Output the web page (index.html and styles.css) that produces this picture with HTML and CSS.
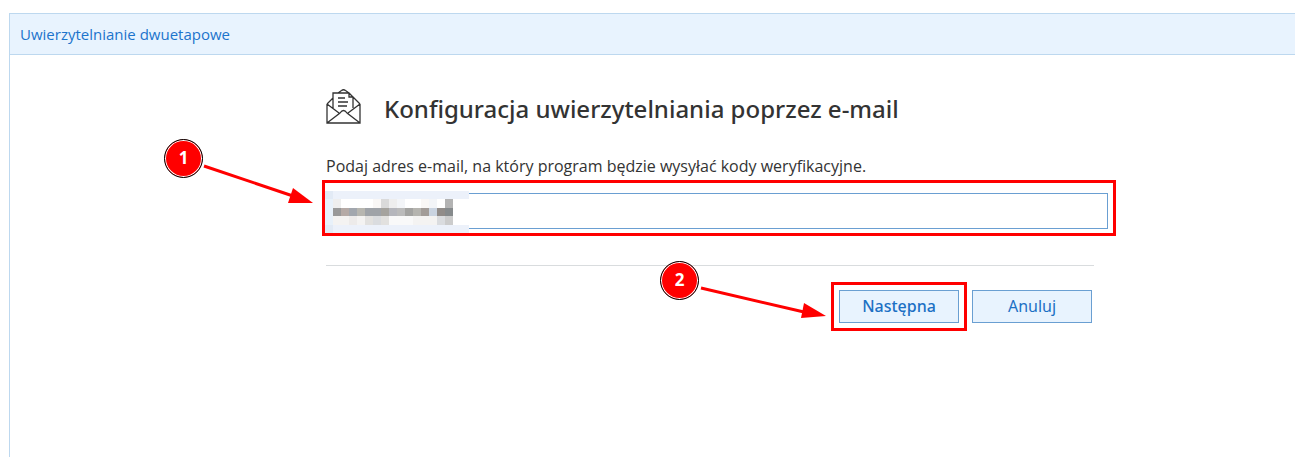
FILE: index.html
```html
<!DOCTYPE html>
<html lang="pl">
<head>
<meta charset="utf-8">
<meta name="viewport" content="width=device-width, initial-scale=1">
<title>Uwierzytelnianie dwuetapowe</title>
<link rel="stylesheet" href="styles.css">
</head>
<body>
<main class="panel">
  <header class="panel-header"><h1 class="panel-title">Uwierzytelnianie dwuetapowe</h1></header>
  <form class="setup">
    <div class="setup-heading">
      <svg class="mail-icon" viewBox="0 0 35 36" aria-hidden="true">
        <path d="M1 15V34H34V15M1 34L14 24Q17.500 19 21 24L34 34M1 15L13 24M34 15L22 24M1 15L7 9M34 15L27 8M7 19V4H23L27 8V19M12 4L15.500 1.500Q17.500 0 19.500 1.500L23 4M23 4V8H27"/>
        <path d="M12 9H19M12 13H22M12 17H21"/>
      </svg>
      <h2 class="setup-title">Konfiguracja uwierzytelniania poprzez e-mail</h2>
    </div>
    <label class="email-label" for="email">Podaj adres e-mail, na który program będzie wysyłać kody weryfikacyjne.</label>
    <div class="field">
      <input class="email-input" id="email" type="email">
      <svg class="mosaic" viewBox="0 0 144 42" shape-rendering="crispEdges" aria-hidden="true">
        <path fill="#fff" d="M0 0H144V42H0z"/>
        <path fill="#ecf1fa" d="M8 0H144V8H8zM8 34H144V42H8z"/>
        <path fill="#e8f1fa" d="M0 8H8V34H0z"/><path fill="#e2eaf5" d="M0 0H8V8H0zM0 34H8V42H0z"/>
        <path fill="#eeeeee" d="M8 8h8v9h-8zM64 8h8v9h-8z"/><path fill="#f9f7f6" d="M48 8h8v9h-8zM96 8h8v9h-8z"/>
        <path fill="#dadada" d="M56 8h8v9h-8z"/><path fill="#f3f5f8" d="M72 8h8v9h-8zM104 8h8v9h-8z"/><path fill="#b3b3b3" d="M120 8h8v9h-8z"/>
        <path fill="#999999" d="M8 17h8v8h-8z"/><path fill="#b5aaa6" d="M16 17h8v8h-8z"/><path fill="#a2a7ae" d="M24 17h8v8h-8z"/>
        <path fill="#b7b6b0" d="M32 17h8v8h-8z"/><path fill="#9fa3a8" d="M40 17h16v8h-16z"/><path fill="#a5a39e" d="M56 17h8v8h-8z"/>
        <path fill="#b5b6bc" d="M64 17h8v8h-8z"/><path fill="#bbbbbb" d="M72 17h8v8h-8z"/><path fill="#a3a3a1" d="M80 17h8v8h-8z"/>
        <path fill="#b5b4af" d="M88 17h8v8h-8z"/><path fill="#a29c98" d="M96 17h8v8h-8z"/><path fill="#cad4e1" d="M104 17h8v8h-8z"/>
        <path fill="#918c89" d="M112 17h8v8h-8z"/><path fill="#868a8c" d="M120 17h8v8h-8z"/>
        <path fill="#f4f3f2" d="M8 25h16v9h-16zM32 25h8v9h-8zM88 25h24v9h-24z"/><path fill="#edebea" d="M24 25h8v9h-8z"/>
        <path fill="#e2e1df" d="M40 25h8v9h-8zM56 25h8v9h-8z"/><path fill="#dadcdf" d="M48 25h8v9h-8zM112 25h8v9h-8z"/>
        <path fill="#f9f9f9" d="M64 25h24v9h-24z"/><path fill="#cccccc" d="M120 25h8v9h-8z"/>
      </svg>
      <span class="highlight highlight-field"></span>
      <span class="badge badge-one">1</span>
      <svg class="arrow arrow-one" viewBox="0 0 110 48" aria-hidden="true"><path class="shaft" d="M1 6L90 36"/><path class="head" d="M90 28L110 43L85 43z"/></svg>
    </div>
    <div class="actions">
      <div class="next">
        <button class="button button-primary" type="submit">Następna</button>
        <span class="highlight highlight-next"></span>
        <span class="badge badge-two">2</span>
        <svg class="arrow arrow-two" viewBox="0 0 126 36" aria-hidden="true"><path class="shaft" d="M1 4L104 28"/><path class="head" d="M104 19L126 32L101 34z"/></svg>
      </div>
      <button class="button" type="button">Anuluj</button>
    </div>
  </form>
</main>
</body>
</html>
```
FILE: styles.css
```css
* { box-sizing: border-box; }
body {
  margin: 0;
  background: #fff;
  color: #333;
  font-family: "Noto Sans", sans-serif;
  font-size: 16px;
}
.panel {
  min-height: calc(100vh - 13px);
  margin: 13px 0 0 9px;
  border-top: 1px solid #bdd8ef;
  border-left: 1px solid #bdd8ef;
}
.panel-header {
  padding: 10px;
  border-bottom: 1px solid #bdd8ef;
  background: #e8f3fe;
}
.panel-title {
  margin: 0;
  color: #1c74cc;
  font-family: "Open Sans", sans-serif;
  font-size: 15px;
  font-weight: 500;
  line-height: 20px;
}
.setup {
  max-width: 1084px;
  padding: 34px 0 0 316px;
}
.setup-heading {
  display: flex;
  align-items: flex-start;
  gap: 23px;
  height: 40px;
}
.mail-icon {
  width: 35px;
  height: 36px;
  fill: none;
  stroke: #333;
  stroke-width: 1.3;
}
.setup-title {
  margin: 0;
  font-size: 24px;
  font-weight: 500;
  line-height: 40px;
}
.email-label {
  display: block;
  margin-top: 25px;
  font-family: "Open Sans", sans-serif;
  line-height: 24px;
}
.field {
  position: relative;
  margin: 15px -14px 0 0;
}
.email-input {
  display: block;
  width: 100%;
  height: 36px;
  padding: 0 8px;
  border: 1px solid #6a9fd2;
  border-radius: 0;
  background: #fff;
  font: inherit;
}
.mosaic {
  position: absolute;
  top: -2px;
  left: -1px;
  width: 144px;
  height: 42px;
}
.highlight {
  position: absolute;
  border: 3px solid #f00;
  pointer-events: none;
}
.highlight-field { inset: -13px -8px -7px -4px; }
.highlight-next { inset: -8px; }
.badge {
  position: absolute;
  width: 39px;
  height: 39px;
  border: 1px solid #000;
  border-radius: 50%;
  background: #f00;
  box-shadow: inset 0 0 0 1px #fff;
  color: #fff;
  font-size: 17px;
  font-weight: 700;
  line-height: 36px;
  text-align: center;
}
.badge-one { top: -54px; left: -162px; }
.badge-two { top: -29px; left: -179px; }
.arrow { position: absolute; }
.arrow-one { top: -33px; left: -123px; width: 110px; height: 48px; }
.arrow-two { top: -6px; left: -139px; width: 126px; height: 36px; }
.shaft { fill: none; stroke: #f00; stroke-width: 3; }
.head { fill: #f00; }
.actions {
  display: flex;
  justify-content: flex-end;
  gap: 13px;
  margin-top: 36px;
  padding: 24px 2px 0 0;
  border-top: 1px solid #d9dcde;
}
.next { position: relative; }
.button {
  display: block;
  width: 120px;
  height: 33px;
  padding: 0 0 2px;
  border: 1px solid #6a9fd2;
  border-radius: 0;
  background: #e8f3fe;
  color: #1c70c4;
  font: inherit;
  cursor: pointer;
}
.button-primary { font-weight: 500; }
```
